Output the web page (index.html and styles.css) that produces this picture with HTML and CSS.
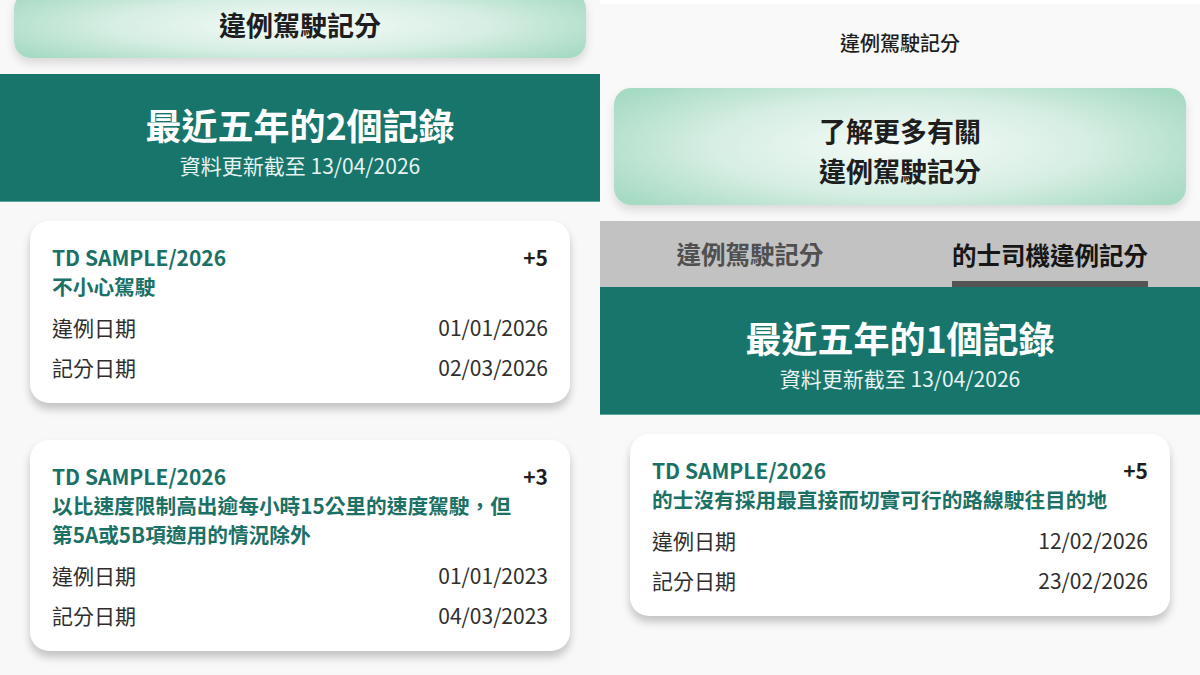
FILE: index.html
```html
<!DOCTYPE html>
<html lang="zh-Hant">
<head>
<meta charset="utf-8">
<title>違例駕駛記分</title>
<link rel="stylesheet" href="styles.css">
</head>
<body>
<div class="screens">
  <section class="panel">
    <div class="cta cta-single"><span>違例駕駛記分</span></div>
    <div class="summary">
      <div class="summary-title">最近五年的2個記錄</div>
      <div class="summary-sub">資料更新截至 13/04/2026</div>
    </div>
    <div class="cards">
      <article class="card">
        <div class="card-head">
          <span class="ref">TD SAMPLE/2026</span>
          <span class="points">+5</span>
        </div>
        <div class="desc">不小心駕駛</div>
        <div class="row"><span>違例日期</span><span>01/01/2026</span></div>
        <div class="row"><span>記分日期</span><span>02/03/2026</span></div>
      </article>
      <article class="card">
        <div class="card-head">
          <span class="ref">TD SAMPLE/2026</span>
          <span class="points">+3</span>
        </div>
        <div class="desc">以比速度限制高出逾每小時15公里的速度駕駛，但<br>第5A或5B項適用的情況除外</div>
        <div class="row"><span>違例日期</span><span>01/01/2023</span></div>
        <div class="row"><span>記分日期</span><span>04/03/2023</span></div>
      </article>
    </div>
  </section>
  <section class="panel panel-right">
    <div class="page-title">違例駕駛記分</div>
    <div class="cta cta-double"><span>了解更多有關<br>違例駕駛記分</span></div>
    <nav class="tabs">
      <div class="tab">違例駕駛記分</div>
      <div class="tab active"><span>的士司機違例記分</span></div>
    </nav>
    <div class="summary summary-flat">
      <div class="summary-title">最近五年的1個記錄</div>
      <div class="summary-sub">資料更新截至 13/04/2026</div>
    </div>
    <div class="cards">
      <article class="card">
        <div class="card-head">
          <span class="ref">TD SAMPLE/2026</span>
          <span class="points">+5</span>
        </div>
        <div class="desc">的士沒有採用最直接而切實可行的路線駛往目的地</div>
        <div class="row"><span>違例日期</span><span>12/02/2026</span></div>
        <div class="row"><span>記分日期</span><span>23/02/2026</span></div>
      </article>
    </div>
  </section>
</div>
</body>
</html>
```
FILE: styles.css
```css
* { box-sizing: border-box; }
html, body { margin: 0; padding: 0; }
body {
  width: 1200px;
  height: 675px;
  overflow: hidden;
  background: #f8f8f8;
  font-family: "Noto Sans CJK TC", "Noto Sans", sans-serif;
  color: #2b2b2b;
}
.screens {
  display: flex;
  width: 1200px;
  height: 675px;
}
.panel {
  width: 600px;
  height: 675px;
  overflow: hidden;
  background: #f8f8f8;
  display: flex;
  flex-direction: column;
}
.panel-right {
  border-top: 4px solid #ffffff;
  background: #f9f9f9;
}

.cta {
  margin: 0 14px;
  border-radius: 17px;
  background: radial-gradient(ellipse 60% 75% at 50% 50%, #f5fbf8 0%, #d6eee3 55%, #a6dac3 100%);
  box-shadow: 0 5px 10px rgba(0, 0, 0, 0.13);
  display: flex;
  justify-content: center;
  font-weight: 700;
  font-size: 27px;
  color: #1e1e1e;
  text-align: center;
  flex-shrink: 0;
}
.cta-single {
  margin-top: -8px;
  height: 66px;
  align-items: center;
  line-height: 40px;
}
.cta-double {
  height: 117px;
  padding-top: 23px;
  line-height: 40px;
}

.page-title {
  font-size: 20px;
  font-weight: 500;
  line-height: 28px;
  text-align: center;
  color: #1e1e1e;
  padding-top: 25px;
  margin-bottom: 31px;
}

.summary {
  margin-top: 16px;
  height: 128px;
  background: #17756b;
  color: #ffffff;
  text-align: center;
  padding-top: 30px;
  border-bottom: 1px solid #5aa79d;
  flex-shrink: 0;
}
.summary-flat { margin-top: 0; }
.summary-title {
  font-size: 36px;
  font-weight: 700;
  line-height: 40px;
}
.summary-sub {
  margin-top: 7px;
  font-size: 21px;
  line-height: 28px;
  color: #e8f2f0;
}

.tabs {
  margin-top: 16px;
  height: 66px;
  background: #c2c2c2;
  display: grid;
  grid-template-columns: 1fr 1fr;
  flex-shrink: 0;
}
.tab {
  display: flex;
  justify-content: center;
  align-items: stretch;
  font-size: 24.5px;
  font-weight: 700;
  color: #505050;
  line-height: 66px;
}
.tab.active { color: #161616; }
.tab.active span {
  border-bottom: 6px solid #545454;
  padding-top: 8px;
  line-height: 52px;
}

.cards {
  padding: 19px 30px 0;
  display: flex;
  flex-direction: column;
  gap: 37px;
}
.card {
  background: #ffffff;
  border-radius: 19px;
  padding: 22px 22px 16px;
  box-shadow: 0 6px 9px rgba(0, 0, 0, 0.22);
}
.card-head {
  display: flex;
  justify-content: space-between;
  line-height: 29px;
  font-size: 21px;
  font-weight: 700;
}
.ref { color: #1b7166; }
.points { color: #1e1e1e; }
.desc {
  font-size: 20.7px;
  font-weight: 700;
  line-height: 29px;
  color: #1b7166;
  margin-bottom: 6px;
}
.row {
  display: flex;
  justify-content: space-between;
  font-size: 21px;
  line-height: 40px;
  color: #2e2e2e;
}
```
